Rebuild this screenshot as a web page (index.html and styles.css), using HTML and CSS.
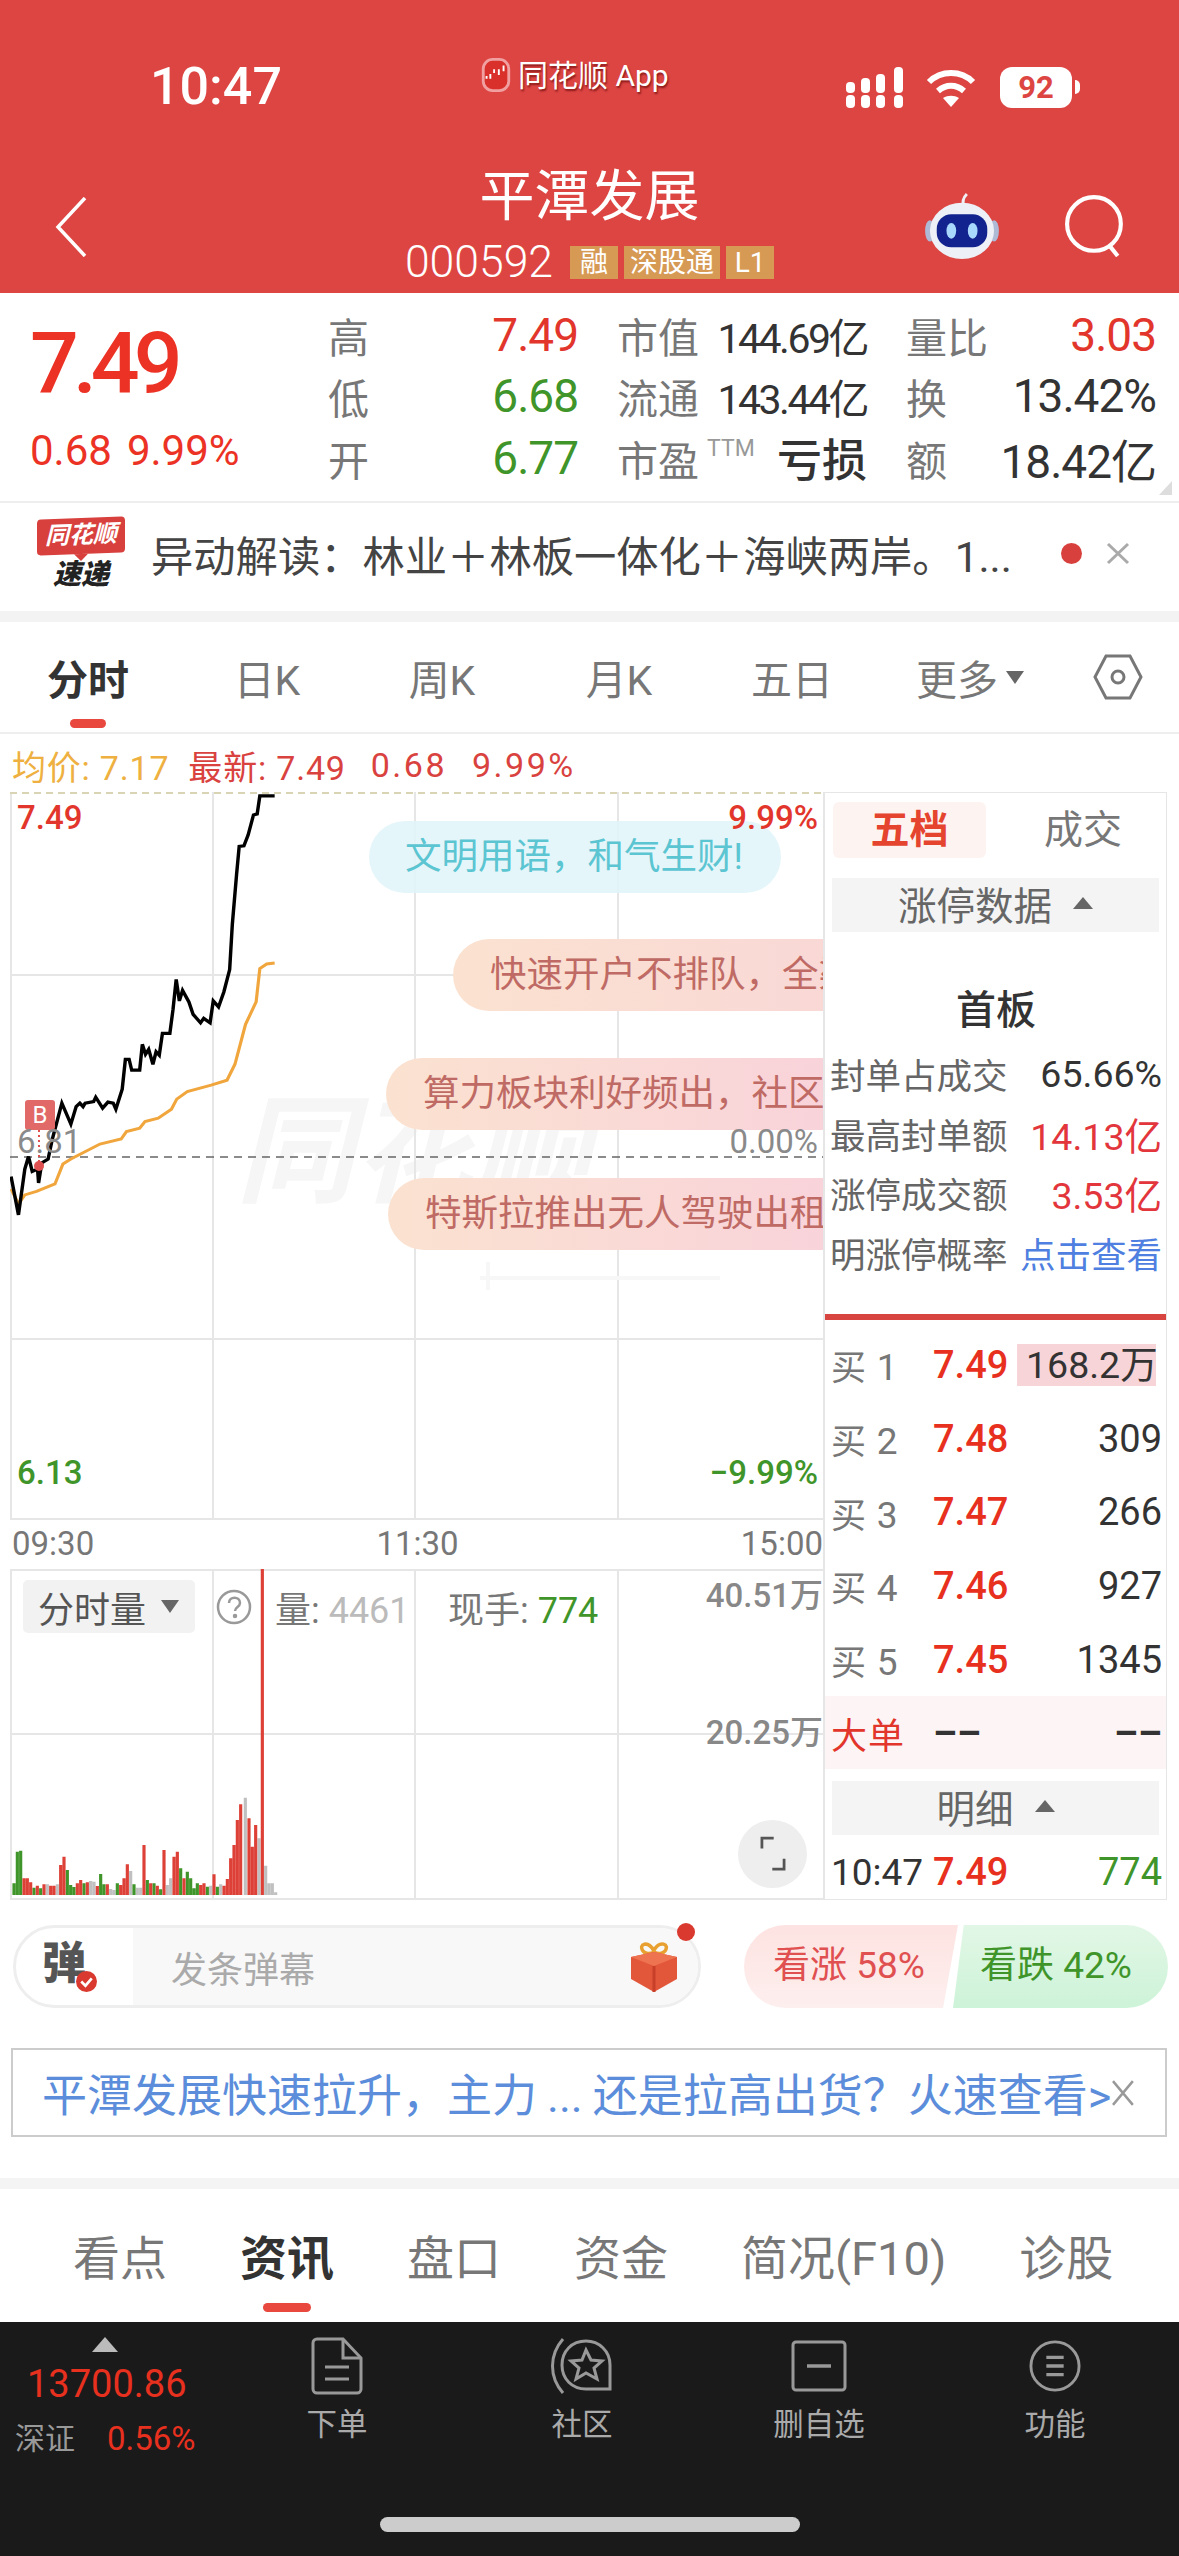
FILE: index.html
```html
<!DOCTYPE html>
<html lang="zh-CN">
<head>
    <meta charset="UTF-8">
    <title>平潭发展 000592</title>
    <link rel="stylesheet" href="styles.css">
</head>
<body>

<header class="top">
    <div class="status">
        <span class="clock">10:47</span>
        <span class="app-name">
            <svg class="app-icon" viewBox="0 0 30 36"><rect x="1.5" y="1.5" width="27" height="33" rx="10" fill="#d9302c" stroke="#f0a0a0" stroke-width="3"/><path d="M5 22v-3M9 22v-5M13 16v-4M18 18v-6M23 14v-6" stroke="#fff" stroke-width="2"/></svg>
            同花顺 App
        </span>
        <div class="status-icons">
            <svg class="signal" viewBox="0 0 58 41" fill="#fff"><rect x="0" y="15" width="9" height="11" rx="4"/><rect x="0" y="28" width="9" height="13" rx="4"/><rect x="15" y="11" width="9" height="15" rx="4"/><rect x="15" y="28" width="9" height="13" rx="4"/><rect x="30" y="7" width="9" height="19" rx="4"/><rect x="30" y="28" width="9" height="13" rx="4"/><rect x="48" y="0" width="9" height="26" rx="4"/><rect x="48" y="28" width="9" height="13" rx="4"/></svg>
            <svg class="wifi" viewBox="0 0 50 38" fill="none" stroke="#fff" stroke-width="6"><path d="M3 13C15 1 35 1 47 13"/><path d="M12 22c8-7 18-7 26 0"/><path d="M25 38l-8-9c5-3 11-3 16 0z" fill="#fff" stroke="none"/></svg>
            <span class="battery">92</span>
            <span class="battery-nub"></span>
        </div>
    </div>
    <div class="nav">
        <div class="nav-left">
            <svg class="back" viewBox="0 0 32 60" fill="none" stroke="#fff" stroke-width="3.5"><path d="M30 1L3 30l27 29"/></svg>
        </div>
        <div class="nav-title">
            <h1>平潭发展</h1>
            <div class="code-row">
                <span class="code">000592</span>
                <span class="tag">融</span>
                <span class="tag tag-wide">深股通</span>
                <span class="tag">L1</span>
            </div>
        </div>
        <div class="nav-right">
            <svg class="robot" viewBox="0 0 76 70">
                <path d="M40 15c-2-5-1-9 3-13" fill="none" stroke="#eef0f5" stroke-width="3"/>
                <ellipse cx="5" cy="40" rx="5" ry="11" fill="#aeb9d6"/><ellipse cx="71" cy="40" rx="5" ry="11" fill="#aeb9d6"/>
                <ellipse cx="38" cy="40" rx="33" ry="29" fill="#edf0f6"/>
                <rect x="12" y="23" width="52" height="34" rx="15" fill="#12238f"/>
                <ellipse cx="27" cy="40" rx="5" ry="8" fill="#a9d8ff"/><ellipse cx="49" cy="40" rx="5" ry="8" fill="#a9d8ff"/>
            </svg>
            <svg class="search" viewBox="0 0 60 60" fill="none" stroke="#fff" stroke-width="4"><ellipse cx="29" cy="28" rx="26" ry="26"/><path d="M44 49l8 10"/></svg>
        </div>
    </div>
</header>

<section class="quote">
    <div class="quote-main">
        <div class="last-price">7.49</div>
        <div class="last-change"><span>0.68</span><span>9.99%</span></div>
    </div>
    <div class="stats">
        <div class="stat"><label>高</label><b class="red">7.49</b></div>
        <div class="stat"><label>市值</label><b class="small">144.69亿</b></div>
        <div class="stat"><label>量比</label><b class="red">3.03</b></div>
        <div class="stat"><label>低</label><b class="green">6.68</b></div>
        <div class="stat"><label>流通</label><b class="small">143.44亿</b></div>
        <div class="stat"><label>换</label><b>13.42%</b></div>
        <div class="stat"><label>开</label><b class="green">6.77</b></div>
        <div class="stat"><label>市盈<i class="ttm">TTM</i></label><b class="loss">亏损</b></div>
        <div class="stat"><label>额</label><b>18.42亿</b></div>
    </div>
    <span class="corner"></span>
</section>

<section class="news">
    <div class="news-logo">
        <span class="news-brand">同花顺</span>
        <span class="news-sub">速递</span>
    </div>
    <p class="news-text">异动解读：林业＋林板一体化＋海峡两岸。1...</p>
    <span class="news-dot"></span>
    <svg class="close-x" viewBox="0 0 24 24" stroke="#aaa" stroke-width="3"><path d="M2 3l20 19M22 3L2 22"/></svg>
</section>

<nav class="period-tabs">
    <a class="active">分时</a>
    <a>日K</a>
    <a>周K</a>
    <a>月K</a>
    <a>五日</a>
    <a>更多<i class="tri-down"></i></a>
    <a><svg class="hex" viewBox="0 0 50 46" fill="none" stroke="#777" stroke-width="3"><path d="M13 2h24l11 21-11 21H13L2 23z"/><circle cx="25" cy="23" r="6"/></svg></a>
</nav>

<div class="price-info">
    <span class="avg">均价: 7.17</span>
    <span class="now">最新: 7.49</span>
    <span class="now wide">0.68</span>
    <span class="now wide">9.99%</span>
</div>

<div class="market">
    <div class="charts">
        <div class="price-chart">
            <span class="watermark">同花顺</span>
            <svg class="plot" viewBox="0 0 813 728">
                <g stroke="#e6e6e6" stroke-width="2">
                    <path d="M0 183H813M0 547H813M1 0V728M203 0V728M405 0V728M608 0V728M0 727H813"/>
                </g>
                <path d="M0 1H813" stroke="#d8d4b4" stroke-width="2" stroke-dasharray="7 5"/>
                <path d="M0 365H813" stroke="#666" stroke-width="1.5" stroke-dasharray="8 6"/>
                <path d="M470 486H710M478 470V498" stroke="#f7f7f7" stroke-width="4"/>
                <svg x="0" y="0" width="813" height="728" viewBox="20 64 1536 1460" preserveAspectRatio="none">
                    <path fill="none" stroke="#f0a63c" stroke-width="6" d="M22 860L36 890L48 872L70 865L105 850L120 810L135 800L190 770L230 760L240 745L265 738L275 725L300 718L325 700L335 680L355 665L400 652L430 642L445 610L465 530L485 485L492 418L505 409L520 407"/>
                    <path fill="none" stroke="#000" stroke-width="6.5" d="M22 835L36 912L48 820L55 795L62 825L72 820L74 848L80 808L92 800L100 760L118 688L135 730L145 695L152 688L158 695L162 688L178 685L182 676L195 698L205 686L215 688L220 700L232 660L238 600L245 600L250 622L265 622L270 570L276 590L282 580L290 610L296 585L302 592L308 548L322 548L328 500L334 440L340 483L346 462L358 485L366 510L380 527L386 518L398 527L404 483L414 495L424 465L435 420L440 330L448 230L453 173L462 172L470 150L480 110L487 108L492 72L520 72"/>
                </svg>
                <path d="M29 338V372" stroke="#e05050" stroke-width="2" stroke-dasharray="2 3"/>
                <circle cx="29" cy="374" r="5" fill="#e05050"/>
            </svg>

            <span class="b-mark">B</span>

            <div class="bubble bubble-a">文明用语，和气生财!</div>
            <div class="bubble bubble-b">快速开户不排队，全渠道</div>
            <div class="bubble bubble-c">算力板块利好频出，社区</div>
            <div class="bubble bubble-d">特斯拉推出无人驾驶出租</div>

            <span class="axis left top-val red">7.49</span>
            <span class="axis right top-val red">9.99%</span>
            <span class="axis left mid-val gray">6.81</span>
            <span class="axis right mid-val gray">0.00%</span>
            <span class="axis left low-val green">6.13</span>
            <span class="axis right low-val green">−9.99%</span>
        </div>

        <div class="time-axis"><span>09:30</span><span>11:30</span><span>15:00</span></div>

        <div class="volume-chart">
            <svg class="plot" viewBox="0 0 813 331">
                <path d="M0 165H813M1 0V331M203 0V331M405 0V331M608 0V331M0 330H813M0 1H813" stroke="#e6e6e6" stroke-width="2"/>
                <svg x="0" y="0" width="813" height="331" viewBox="30 -333 2439 993" fill="none" stroke-width="9.5">
                    <path stroke="#c0c0c0" d="M142 645v-32M172 645v-32M272 645v-42M282 645v-40M332 645v-18M342 645v-15M392 645v-72M412 645v-22M422 645v-22M502 645v-30M512 645v-50M632 645v-28M662 645v-32M736 645v-292M777 645v-170M797 645v-88M807 645v-35M817 645v-35M827 645v-8"/>
                    <path stroke="#3f952a" d="M42 645v-35M52 645v-130M62 645v-133M102 645v-22M122 645v-20M202 645v-75M212 645v-30M222 645v-24M252 645v-35M302 645v-63M312 645v-32M352 645v-35M402 645v-32M442 645v-45M462 645v-35M482 645v-17M542 645v-80M562 645v-70M572 645v-50M582 645v-20M592 645v-35M622 645v-25M652 645v-25"/>
                    <path stroke="#dd4037" d="M72 645v-50M82 645v-50M92 645v-38M112 645v-28M132 645v-32M152 645v-28M162 645v-28M182 645v-90M192 645v-115M232 645v-35M242 645v-45M262 645v-38M292 645v-27M322 645v-32M362 645v-30M372 645v-50M382 645v-92M432 645v-150M452 645v-35M472 645v-28M492 645v-135M522 645v-115M532 645v-130M552 645v-50M602 645v-30M612 645v-35M642 645v-62M672 645v-28M682 645v-48M692 645v-110M702 645v-150M712 645v-225M722 645v-272M747 645v-230M757 645v-145M767 645v-210M787 645V-333"/>
                </svg>
            </svg>
            <div class="vol-head">
                <span class="vol-select">分时量<i class="tri-down dark"></i></span>
                <svg class="help" viewBox="0 0 36 36" fill="none" stroke="#999" stroke-width="2.5"><circle cx="18" cy="18" r="16"/><path d="M13 14c0-7 11-7 11 0 0 4-5 4-5 8"/><circle cx="19" cy="27" r="1" fill="#999"/></svg>
                <span class="vol-item vol-first">量: <em class="pale">4461</em></span>
                <span class="vol-item vol-second">现手: <em class="green">774</em></span>
            </div>
            <span class="vol-axis vol-max">40.51万</span>
            <span class="vol-axis vol-mid">20.25万</span>
            <div class="expand">
                <svg viewBox="0 0 36 52" fill="none" stroke="#555" stroke-width="4"><path d="M2 18V3h17"/><path d="M34 33v15H17"/></svg>
            </div>
        </div>
    </div>

    <aside class="depth">
        <div class="depth-tabs">
            <span class="depth-tab active">五档</span>
            <span class="depth-tab">成交</span>
        </div>
        <div class="fold-bar">涨停数据<i class="tri-up"></i></div>
        <h3 class="board">首板</h3>
        <div class="limit-row"><span>封单占成交</span><b>65.66%</b></div>
        <div class="limit-row"><span>最高封单额</span><b class="alert">14.13亿</b></div>
        <div class="limit-row"><span>涨停成交额</span><b class="alert">3.53亿</b></div>
        <div class="limit-row"><span>明涨停概率</span><b class="link">点击查看</b></div>
        <div class="depth-line"></div>
        <div class="bid"><span class="bid-name">买 <i>1</i></span><b>7.49</b><span class="qty big-qty">168.2万</span></div>
        <div class="bid"><span class="bid-name">买 <i>2</i></span><b>7.48</b><span class="qty">309</span></div>
        <div class="bid"><span class="bid-name">买 <i>3</i></span><b>7.47</b><span class="qty">266</span></div>
        <div class="bid"><span class="bid-name">买 <i>4</i></span><b>7.46</b><span class="qty">927</span></div>
        <div class="bid"><span class="bid-name">买 <i>5</i></span><b>7.45</b><span class="qty">1345</span></div>
        <div class="bid big-order"><span class="bid-name">大单</span><b>––</b><span class="qty">––</span></div>
        <div class="fold-bar detail">明细<i class="tri-up"></i></div>
        <div class="bid trade"><span class="bid-name">10:47</span><b>7.49</b><span class="qty green">774</span></div>
    </aside>
</div>

<section class="barrage">
    <div class="barrage-input">
        <div class="barrage-icon">
            <span>弹</span>
            <svg class="badge" viewBox="0 0 20 20"><circle cx="10" cy="10" r="10" fill="#d9392e"/><path d="M5 10l4 4 6-7" fill="none" stroke="#fff" stroke-width="2.5"/></svg>
        </div>
        <div class="barrage-field">
            <span>发条弹幕</span>
            <svg class="gift" viewBox="0 0 48 50">
                <path d="M24 9C18-2 8 2 13 9c2 3 7 3 11 1 4 2 9 2 11-1 5-7-5-11-11-1z" fill="none" stroke="#e8a030" stroke-width="3.5"/>
                <path d="M1 15L24 10l23 5v22L24 50 1 37z" fill="#e2573a"/>
                <path d="M1 15l23 9 23-9-23-5z" fill="#ee7350"/>
                <path d="M24 24v26" stroke="#c9402a" stroke-width="3"/>
            </svg>
        </div>
        <span class="barrage-dot"></span>
    </div>
    <div class="vote vote-up">看涨 58%</div>
    <div class="vote vote-down">看跌 42%</div>
</section>

<section class="promo">
    <span class="promo-text">平潭发展快速拉升，主力<span class="dots">...</span>还是拉高出货？火速查看&gt;</span>
    <svg class="close-x promo-x" viewBox="0 0 24 28" stroke="#999" stroke-width="2.5"><path d="M2 2l20 24M22 2L2 26"/></svg>
</section>

<nav class="info-tabs">
    <a>看点</a>
    <a class="active">资讯</a>
    <a>盘口</a>
    <a>资金</a>
    <a>简况(F10)</a>
    <a>诊股</a>
</nav>

<footer class="dock">
    <div class="dock-grid">
        <div class="ticker">
            <i class="ticker-tri"></i>
            <span class="ticker-val">13700.86</span>
            <div class="ticker-row"><span>深证</span><b>0.56%</b></div>
        </div>
        <div class="dock-item">
            <svg viewBox="0 0 52 58" fill="none" stroke="#999" stroke-width="3"><path d="M6 2h26l18 19v31a4 4 0 0 1-4 4H6a4 4 0 0 1-4-4V6a4 4 0 0 1 4-4z"/><path d="M32 2v19h18M14 30h24M14 42h24"/></svg>
            <span>下单</span>
        </div>
        <div class="dock-item">
            <svg viewBox="0 0 62 58" fill="none" stroke="#999" stroke-width="3"><path d="M12 56C-2 40-2 18 12 2"/><path d="M35 4c13 0 24 10 24 24v24H35C21 52 11 42 11 28S21 4 35 4z"/><path d="M35 13l5 10 11 1-8 7 3 11-11-6-10 6 3-11-8-7 11-1z"/></svg>
            <span>社区</span>
        </div>
        <div class="dock-item">
            <svg class="icon-small" viewBox="0 0 56 52" fill="none" stroke="#999" stroke-width="3"><rect x="2" y="2" width="52" height="48" rx="3"/><path d="M16 26h24" stroke-width="3.5"/></svg>
            <span>删自选</span>
        </div>
        <div class="dock-item">
            <svg class="icon-small" viewBox="0 0 54 54" fill="none" stroke="#999" stroke-width="3"><ellipse cx="27" cy="27" rx="25" ry="25"/><path d="M18 18h18M18 27h18M18 36h18" stroke-width="3.5"/></svg>
            <span>功能</span>
        </div>
    </div>
    <div class="home-bar"></div>
</footer>

</body>
</html>
```

FILE: styles.css
```css
* {
    box-sizing: border-box;
}

html, body {
    margin: 0;
    padding: 0;
}

body {
    width: 1179px;
    height: 2556px;
    overflow: hidden;
    background: #fff;
    color: #333;
    font-family: Roboto, "Noto Sans CJK SC", sans-serif;
}

i, em {
    font-style: normal;
}

.red { color: #e2362c; }
.green { color: #3f952a; }
.gray { color: #8a8a8a; }
.pale { color: #bbb; }

/* header */
.top {
    height: 293px;
    background: #dd4543;
    color: #fff;
    overflow: hidden;
}

.status {
    display: flex;
    height: 125px;
    padding: 61px 99px 0 150px;
}

.clock {
    width: 331px;
    font-size: 52px;
    font-weight: 500;
    line-height: 52px;
}

.app-name {
    display: flex;
    align-items: flex-start;
    gap: 7px;
    font-size: 30px;
    line-height: 30px;
    text-shadow: 1px 2px 2px rgba(90, 0, 0, .65);
}

.app-icon {
    width: 30px;
    height: 34px;
    margin-top: -3px;
}

.status-icons {
    display: flex;
    align-items: flex-start;
    margin-left: auto;
    margin-top: 6px;
}

.signal {
    width: 58px;
    height: 41px;
    margin-right: 22px;
}

.wifi {
    width: 50px;
    height: 38px;
    margin-top: 2px;
    margin-right: 24px;
}

.battery {
    width: 72px;
    height: 41px;
    border-radius: 12px;
    background: #fff;
    color: #dd4543;
    font-size: 31px;
    font-weight: 700;
    line-height: 41px;
    text-align: center;
}

.battery-nub {
    width: 5px;
    height: 14px;
    margin: 13px 0 0 3px;
    background: #fff;
    border-radius: 0 5px 5px 0;
}

.nav {
    display: grid;
    grid-template-columns: 1fr auto 1fr;
    height: 168px;
}

.nav-left {
    padding: 72px 0 0 55px;
}

.back {
    width: 32px;
    height: 60px;
}

.nav-title {
    text-align: center;
}

.nav-title h1 {
    margin: 41px 0 0;
    font-size: 55px;
    font-weight: 400;
    line-height: 60px;
}

.code-row {
    display: flex;
    align-items: center;
    gap: 6px;
    height: 34px;
    margin-top: 19px;
}

.code {
    margin-right: 11px;
    font-size: 44.5px;
    font-weight: 300;
}

.tag {
    width: 48px;
    height: 33px;
    background: #d69a55;
    font-size: 28px;
    line-height: 33px;
    white-space: nowrap;
}

.tag-wide {
    width: 96px;
}

.nav-right {
    display: flex;
    justify-content: flex-end;
    align-items: flex-start;
    gap: 64px;
    padding: 67px 53px 0 0;
}

.robot {
    width: 76px;
    height: 68px;
}

.search {
    width: 62px;
    height: 62px;
    margin-top: 3px;
}

/* quote */
.quote {
    position: relative;
    display: flex;
    height: 210px;
    border-bottom: 2px solid #eee;
}

.quote-main {
    width: 328px;
    padding: 26px 0 0 30px;
    color: #ec3224;
}

.last-price {
    font-size: 86px;
    font-weight: 500;
    letter-spacing: -6px;
    line-height: 90px;
}

.last-change {
    display: flex;
    gap: 15px;
    margin-top: 19px;
    font-size: 42px;
    line-height: 46px;
}

.stats {
    display: grid;
    grid-template-columns: repeat(3, 250px);
    grid-auto-rows: 61.5px;
    column-gap: 39px;
    padding-top: 11px;
    width: 829px;
}

.stat {
    display: flex;
    justify-content: space-between;
    align-items: center;
}

.stat label {
    display: flex;
    color: #777;
    font-size: 41px;
}

.stat b {
    font-size: 46px;
    font-weight: 400;
    letter-spacing: -1px;
}

.stat .small {
    font-size: 41px;
    letter-spacing: -2.5px;
}

.stat .loss {
    font-size: 45px;
    font-weight: 500;
    letter-spacing: 0;
}

.ttm {
    margin: 6px 0 0 8px;
    color: #999;
    font-size: 23px;
    line-height: 30px;
}

.corner {
    position: absolute;
    right: 7px;
    bottom: 6px;
    border-style: solid;
    border-width: 0 0 14px 13px;
    border-color: transparent transparent #ddd transparent;
}

/* news */
.news {
    display: flex;
    align-items: center;
    height: 119px;
    padding: 0 49px 8px 37px;
    border-bottom: 11px solid #f3f3f3;
}

.news-logo {
    display: flex;
    flex-direction: column;
    align-items: center;
    width: 88px;
    margin-right: 26px;
}

.news-brand {
    position: relative;
    width: 88px;
    height: 36px;
    background: #d8403d;
    border-radius: 4px;
    color: #fff;
    font-size: 24px;
    font-weight: 700;
    font-style: italic;
    line-height: 35px;
    text-align: center;
    transform: skewY(-2deg);
}

.news-brand::after {
    content: "";
    position: absolute;
    left: 37px;
    top: 36px;
    border-style: solid;
    border-width: 7px 7px 0;
    border-color: #d8403d transparent transparent;
}

.news-sub {
    margin-top: 7px;
    color: #222;
    font-size: 28px;
    font-weight: 900;
    font-style: italic;
    line-height: 28px;
}

.news-text {
    margin: 0;
    color: #444;
    font-size: 42.3px;
    white-space: nowrap;
}

.news-dot {
    width: 21px;
    height: 21px;
    margin-left: auto;
    margin-right: 24px;
    border-radius: 50%;
    background: #d8403d;
}

.close-x {
    width: 24px;
    height: 24px;
}

/* period tabs */
.period-tabs {
    display: grid;
    grid-template-columns: 176px 182px 168px 186px 160px 196px 100px;
    align-items: center;
    height: 112px;
    border-bottom: 2px solid #eee;
    color: #777;
    font-size: 41px;
}

.period-tabs a {
    position: relative;
    display: flex;
    justify-content: center;
    align-items: center;
}

.period-tabs .active {
    color: #333;
    font-weight: 700;
}

.period-tabs .active::after {
    content: "";
    position: absolute;
    left: 70px;
    top: 72px;
    width: 36px;
    height: 9px;
    border-radius: 5px;
    background: #e8483e;
}

.tri-down {
    display: inline-block;
    margin-left: 8px;
    border-style: solid;
    border-width: 13px 9px 0;
    border-color: #666 transparent transparent;
}

.hex {
    width: 50px;
    height: 46px;
}

/* info line */
.price-info {
    display: flex;
    align-items: center;
    gap: 25px;
    height: 58px;
    padding: 4px 0 0 12px;
    font-size: 34px;
    letter-spacing: .8px;
}

.avg {
    margin-right: -6px;
    color: #eeb040;
}

.now {
    color: #d9423e;
}

.now.wide {
    letter-spacing: 2.5px;
}

/* market area */
.market {
    display: flex;
    align-items: flex-start;
}

.charts {
    width: 813px;
    margin-left: 10px;
}

.price-chart {
    position: relative;
    height: 728px;
    overflow: hidden;
}

.plot {
    position: absolute;
    left: 0;
    top: 0;
    width: 100%;
    height: 100%;
}

.watermark {
    position: absolute;
    left: 226px;
    top: 302px;
    color: #f6f6f6;
    font-size: 118px;
    font-weight: 700;
    font-style: italic;
    line-height: 118px;
}

.axis {
    position: absolute;
    font-size: 33px;
    font-weight: 500;
    line-height: 36px;
}

.axis.left { left: 7px; }
.axis.right { right: 5px; }
.top-val { top: 8px; }
.mid-val { top: 332px; font-weight: 400; }
.low-val { top: 663px; }

.b-mark {
    position: absolute;
    left: 15px;
    top: 308px;
    width: 30px;
    height: 30px;
    border-radius: 3px;
    background: #e16a68;
    color: #fff;
    font-size: 24px;
    line-height: 30px;
    text-align: center;
}

.bubble {
    position: absolute;
    height: 72px;
    border-radius: 36px;
    font-size: 36.5px;
    line-height: 71px;
    white-space: nowrap;
    overflow: hidden;
}

.bubble-a {
    left: 359px;
    top: 29px;
    width: 412px;
    padding-left: 36px;
    background: rgba(225, 245, 249, .85);
    color: #5cc5d2;
}

.bubble-b, .bubble-c, .bubble-d {
    width: 520px;
    padding-left: 37px;
    background: linear-gradient(90deg, #fbe2d0, #f8d0dc);
    color: #bf6a64;
}

.bubble-b {
    left: 443px;
    top: 147px;
    background: linear-gradient(90deg, #fbe2d0, #f8d4d8);
}

.bubble-c {
    left: 376px;
    top: 266px;
}

.bubble-d {
    left: 378px;
    top: 386px;
}

.time-axis {
    display: flex;
    justify-content: space-between;
    height: 49px;
    padding: 1px 0 0 2px;
    color: #777;
    font-size: 33px;
    line-height: 46px;
}

.volume-chart {
    position: relative;
    height: 331px;
}

.vol-head {
    position: absolute;
    left: 13px;
    top: 11px;
    display: flex;
    align-items: center;
    height: 53px;
    color: #777;
    font-size: 36px;
}

.vol-select {
    display: flex;
    align-items: center;
    width: 172px;
    height: 53px;
    padding-left: 15px;
    border-radius: 5px;
    background: #f2f2f2;
    color: #555;
}

.tri-down.dark {
    margin-left: 15px;
}

.help {
    width: 36px;
    height: 36px;
    margin-left: 21px;
}

.vol-first {
    margin-left: 23px;
    width: 173px;
}

.vol-axis {
    position: absolute;
    right: 0;
    color: #888;
    font-size: 33px;
    font-weight: 500;
    line-height: 36px;
}

.vol-max { top: 9px; }
.vol-mid { top: 146px; }

.expand {
    position: absolute;
    left: 728px;
    top: 251px;
    display: flex;
    justify-content: center;
    align-items: center;
    width: 69px;
    height: 68px;
    border-radius: 50%;
    background: #eee;
}

.expand svg {
    width: 36px;
    height: 36px;
}

/* five levels */
.depth {
    width: 344px;
    height: 1108px;
    padding: 9px 4px 0 5px;
    border: 1px solid #e6e6e6;
    border-left-width: 2px;
    color: #333;
}

.depth-tabs {
    display: flex;
    height: 56px;
    margin-left: 3px;
}

.depth-tab {
    width: 153px;
    border-radius: 6px;
    color: #777;
    font-size: 39px;
    line-height: 56px;
    text-align: center;
}

.depth-tab + .depth-tab {
    width: 174px;
    padding-left: 20px;
}

.depth-tab.active {
    background: #fdf3f1;
    color: #e5442f;
    font-weight: 700;
}

.fold-bar {
    display: flex;
    justify-content: center;
    align-items: center;
    height: 54px;
    margin: 20px 3px 0 2px;
    padding-bottom: 4px;
    background: #f4f4f4;
    color: #666;
    font-size: 38.5px;
}

.tri-up {
    margin-left: 21px;
    border-style: solid;
    border-width: 0 10px 12px;
    border-color: transparent transparent #666;
}

.board {
    margin: 0;
    padding-top: 54px;
    height: 112px;
    color: #333;
    font-size: 40px;
    font-weight: 500;
    line-height: 50px;
    text-align: center;
}

.limit-row {
    display: flex;
    justify-content: space-between;
    align-items: center;
    height: 59.5px;
    color: #666;
    font-size: 35.5px;
}

.limit-row b {
    color: #333;
    font-size: 37.5px;
    font-weight: 400;
}

.limit-row .alert {
    color: #e2363c;
}

.limit-row .link {
    color: #4f7fe0;
    font-size: 35.5px;
}

.depth-line {
    height: 6px;
    margin: 32px -4px 8px -5px;
    background: #d8443f;
}

.bid {
    display: flex;
    align-items: center;
    height: 73.7px;
}

.bid-name {
    width: 103px;
    padding-left: 1px;
    color: #777;
    font-size: 35px;
    white-space: nowrap;
}

.bid-name i {
    font-size: 37px;
    margin-left: 2px;
}

.bid b {
    color: #e8301f;
    font-size: 38px;
    font-weight: 500;
}

.qty {
    margin-left: auto;
    font-size: 38px;
}

.big-qty {
    width: 145px;
    height: 42px;
    padding-left: 9px;
    background: linear-gradient(#f7d4d8, #f7d4d8) no-repeat left / 139px 100%;
    font-size: 37.5px;
    line-height: 42px;
    white-space: nowrap;
}

.big-order {
    height: 73px;
    margin: 0 -4px 0 -5px;
    padding: 0 4px 0 5px;
    background: #fdf5f5;
}

.big-order .bid-name {
    color: #e2362c;
    font-size: 36px;
    letter-spacing: 1px;
}

.big-order b,
.big-order .qty {
    color: #333;
    font-weight: 700;
    font-size: 38px;
}

.detail {
    margin-top: 12px;
}

.trade {
    height: 66px;
    padding-top: 8px;
}

.trade .bid-name {
    color: #333;
    font-size: 37px;
}

.trade .green {
    color: #3f952a;
}

/* barrage row */
.barrage {
    display: flex;
    height: 148px;
    padding: 25px 0 0 13px;
}

.barrage-input {
    position: relative;
    display: flex;
    width: 688px;
    height: 83px;
    border: 3px solid #eee;
    border-radius: 42px;
    margin-right: 43px;
}

.barrage-icon {
    position: relative;
    width: 117px;
    padding-left: 26px;
    color: #555;
    font-size: 44px;
    font-weight: 900;
    line-height: 72px;
}

.badge {
    position: absolute;
    left: 60px;
    top: 43px;
    width: 21px;
    height: 21px;
}

.barrage-field {
    display: flex;
    flex: 1;
    align-items: center;
    justify-content: space-between;
    padding: 0 20px 0 38px;
    background: #f8f8f8;
    border-radius: 0 40px 40px 0;
    color: #aaa;
    font-size: 36px;
}

.gift {
    width: 48px;
    height: 50px;
}

.barrage-dot {
    position: absolute;
    right: 3px;
    top: -5px;
    width: 18px;
    height: 18px;
    border-radius: 50%;
    background: #d9392e;
}

.vote {
    height: 83px;
    font-size: 37px;
    line-height: 81px;
    white-space: nowrap;
}

.vote-up {
    width: 214px;
    padding-left: 29px;
    border-radius: 42px 0 0 42px;
    background: linear-gradient(180deg, #fde3e1, #fdefee);
    color: #e05050;
    clip-path: polygon(0 0, 100% 0, 93% 100%, 0 100%);
}

.vote-down {
    width: 215px;
    margin-left: -5px;
    padding-left: 27px;
    border-radius: 0 42px 42px 0;
    background: linear-gradient(180deg, #e2f7e6, #cdf3d8);
    color: #3f952a;
    clip-path: polygon(5% 0, 100% 0, 100% 100%, 0 100%);
}

/* promo */
.promo {
    display: flex;
    align-items: center;
    width: 1156px;
    height: 89px;
    margin-left: 11px;
    padding: 0 30px 0 29px;
    border: 2px solid #ccc;
}

.promo-text {
    color: #5b8ddb;
    font-size: 45px;
    white-space: nowrap;
}

.dots {
    padding: 0 10px;
}

.promo-x {
    margin-left: auto;
    width: 24px;
    height: 28px;
}

/* info tabs */
.info-tabs {
    display: flex;
    gap: 73px;
    height: 144px;
    margin-top: 41px;
    padding: 37px 0 0 73px;
    border-top: 11px solid #f4f4f4;
    color: #777;
    font-size: 47px;
    line-height: 66px;
}

.info-tabs a {
    position: relative;
}

.info-tabs .active {
    color: #333;
    font-weight: 700;
}

.info-tabs .active::after {
    content: "";
    position: absolute;
    left: 23px;
    top: 77px;
    width: 48px;
    height: 9px;
    border-radius: 5px;
    background: #e8483e;
}

/* bottom dock */
.dock {
    height: 234px;
    background: #1a1a1a;
}

.dock-grid {
    display: grid;
    grid-template-columns: 217px 240px 250px 224px 248px;
    height: 195px;
}

.ticker {
    position: relative;
    display: flex;
    flex-direction: column;
    padding: 15px 0 0 15px;
}

.ticker-tri {
    width: 0;
    margin-left: 77px;
    border-style: solid;
    border-width: 0 13px 15px;
    border-color: transparent transparent #bbb;
}

.ticker-val {
    margin: 9px 0 0 12px;
    color: #e8301f;
    font-size: 38px;
    line-height: 46px;
}

.ticker-row {
    display: flex;
    gap: 32px;
    margin-top: 12px;
    color: #999;
    font-size: 30px;
    line-height: 40px;
}

.ticker-row b {
    color: #e8301f;
    font-size: 33px;
    font-weight: 400;
}

.dock-item {
    display: flex;
    flex-direction: column;
    align-items: center;
    padding-top: 15px;
    color: #aaa;
    font-size: 30.5px;
}

.dock-item svg {
    height: 58px;
    width: 62px;
}

.dock-item .icon-small {
    height: 52px;
    margin: 3px 0;
}

.dock-item span {
    margin-top: 5px;
}

.home-bar {
    width: 420px;
    height: 15px;
    margin: 0 auto;
    border-radius: 8px;
    background: #ccc;
}
```
